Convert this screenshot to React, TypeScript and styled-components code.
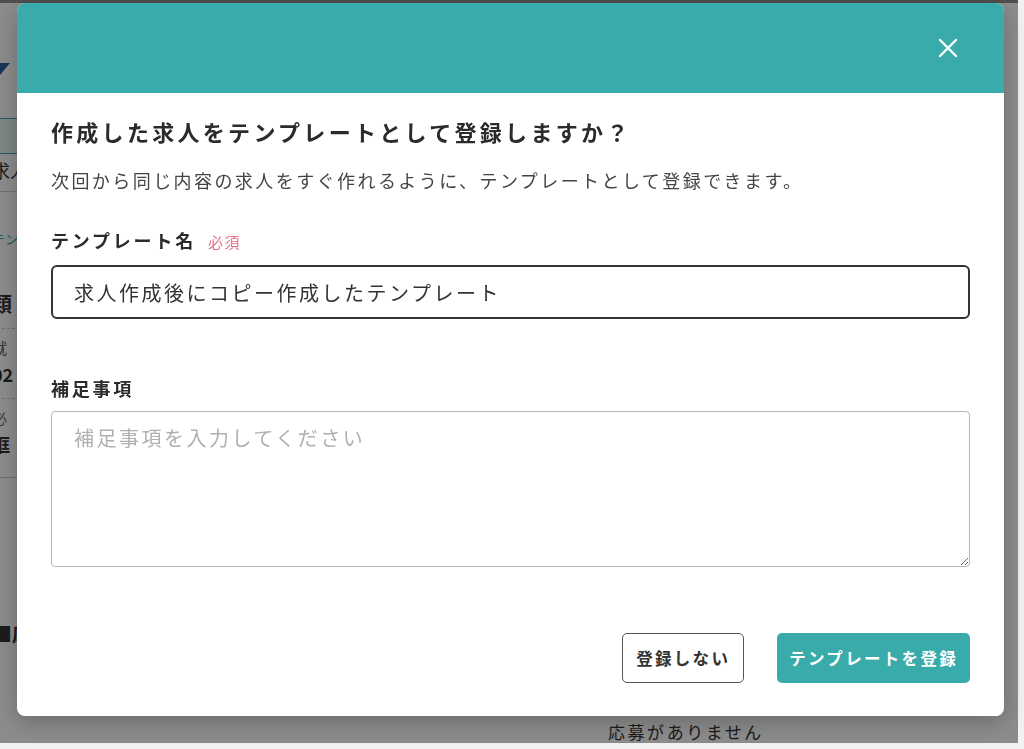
import styled, { createGlobalStyle } from 'styled-components';

const GlobalStyle = createGlobalStyle`
    * { box-sizing: border-box; }
    html, body {
        margin: 0;
        padding: 0;
        background: #f2f2f2;
        font-family: "Noto Sans CJK JP", "Noto Sans", sans-serif;
        color: #333;
        overflow: hidden;
    }
`;

const TEAL = '#3aabab';

/* ---- page behind the dialog ---- */

const Page = styled.div`
    width: 1018px;
    height: 743px;
    background: #fff;
    border-top: 3px solid #909090;
    display: flex;
    flex-direction: column;
`;

const SideColumn = styled.div`
    margin-left: -8px;
    width: 260px;
    display: flex;
    flex-direction: column;
`;

const Triangle = styled.div`
    margin-top: 60px;
    margin-left: 8px;
    width: 0;
    height: 0;
    border-top: 12px solid #2f5f9e;
    border-right: 10px solid transparent;
`;

const TabBox = styled.div`
    margin-top: 43px;
    height: 36px;
    border-top: 1px solid ${TEAL};
    border-bottom: 1px solid ${TEAL};
    background: #e4f3f3;
`;

const PlainText = styled.div<{ $size?: number; $bold?: boolean; $color?: string; $mt?: number }>`
    margin-top: ${p => p.$mt ?? 0}px;
    font-size: ${p => p.$size ?? 14}px;
    font-weight: ${p => (p.$bold ? 700 : 400)};
    color: ${p => p.$color ?? '#333'};
    line-height: 1.4;
    white-space: nowrap;
`;

const Rule = styled.div<{ $dotted?: boolean; $mt?: number }>`
    margin-top: ${p => p.$mt ?? 0}px;
    border-top: 1px ${p => (p.$dotted ? 'dashed' : 'solid')} #ccc;
`;

const EmptyNote = styled.div`
    margin-top: auto;
    padding-left: 608px;
    font-size: 17px;
    line-height: 22px;
    color: #333;
    letter-spacing: 0.15em;
`;

/* ---- overlay + dialog ---- */

const Overlay = styled.div`
    position: fixed;
    top: 0;
    left: 0;
    width: 1018px;
    height: 743px;
    background: rgba(0, 0, 0, 0.45);
    display: flex;
    align-items: flex-start;
    padding: 3px 14px 0 17px;
`;

const Dialog = styled.div`
    width: 987px;
    background: #fff;
    border-radius: 8px;
    overflow: hidden;
    box-shadow: 0 6px 24px rgba(0, 0, 0, 0.25);
`;

const DialogHeader = styled.div`
    height: 90px;
    background: ${TEAL};
    display: flex;
    justify-content: flex-end;
    align-items: center;
    padding-right: 44px;
`;

const CloseButton = styled.button`
    width: 24px;
    height: 24px;
    border: none;
    background: none;
    padding: 0;
    display: flex;
    align-items: center;
    justify-content: center;
    cursor: pointer;
`;

const DialogBody = styled.div`
    padding: 22px 34px 33px 34px;
    display: flex;
    flex-direction: column;
`;

const Title = styled.h2`
    margin: 0;
    font-size: 22px;
    line-height: 32px;
    font-weight: 700;
    letter-spacing: 0.15em;
    color: #2b2b2b;
`;

const Lead = styled.p`
    margin: 19px 0 0 0;
    font-size: 18px;
    line-height: 28px;
    letter-spacing: 0.135em;
    color: #444;
`;

const Field = styled.div<{ $mt: number }>`
    margin-top: ${p => p.$mt}px;
    display: flex;
    flex-direction: column;
`;

const LabelRow = styled.label`
    display: flex;
    align-items: baseline;
    gap: 12px;
    font-size: 18px;
    line-height: 26px;
    font-weight: 700;
    letter-spacing: 0.155em;
    color: #2b2b2b;
`;

const Required = styled.span`
    font-size: 15px;
    font-weight: 400;
    letter-spacing: 0.1em;
    color: #e2708a;
`;

const TextInput = styled.input`
    margin-top: 10px;
    width: 100%;
    height: 54px;
    border: 2px solid #333;
    border-radius: 6px;
    padding: 0 21px;
    font-family: inherit;
    font-size: 20px;
    letter-spacing: 0.125em;
    color: #333;
    outline: none;
`;

const TextArea = styled.textarea`
    margin-top: 10px;
    width: 100%;
    height: 156px;
    border: 1px solid #b8b8b8;
    border-radius: 4px;
    padding: 12px 22px;
    font-family: inherit;
    font-size: 20px;
    line-height: 28px;
    letter-spacing: 0.125em;
    color: #333;
    outline: none;
    &::placeholder {
        color: #b0b0b0;
    }
`;

const Footer = styled.div`
    margin-top: 66px;
    display: flex;
    justify-content: flex-end;
    gap: 33px;
`;

const Button = styled.button<{ $primary?: boolean }>`
    height: 50px;
    padding: 0 ${p => (p.$primary ? 12 : 13)}px;
    border-radius: 5px;
    border: ${p => (p.$primary ? 'none' : '1.5px solid #555')};
    background: ${p => (p.$primary ? TEAL : '#fff')};
    color: ${p => (p.$primary ? '#fff' : '#333')};
    font-family: inherit;
    font-size: 16.5px;
    font-weight: 700;
    letter-spacing: 0.14em;
    cursor: pointer;
`;

function App() {
    return (
        <>
            <GlobalStyle />
            <Page>
                <SideColumn>
                    <Triangle />
                    <TabBox />
                    <PlainText $size={18} $mt={4}>求人</PlainText>
                    <Rule $mt={8} />
                    <PlainText $size={13} $color={TEAL} $mt={38}>テンプレ</PlainText>
                    <PlainText $size={20} $bold $mt={42}>類</PlainText>
                    <Rule $dotted $mt={10} />
                    <PlainText $size={15} $color="#666" $mt={8}>就</PlainText>
                    <PlainText $size={18} $bold $mt={4}>02</PlainText>
                    <Rule $dotted $mt={10} />
                    <PlainText $size={15} $color="#666" $mt={8}>必</PlainText>
                    <PlainText $size={18} $bold $mt={4}>框</PlainText>
                    <Rule $mt={20} />
                    <PlainText $size={20} $bold $mt={142}>■応</PlainText>
                </SideColumn>
                <EmptyNote>応募がありません</EmptyNote>
            </Page>

            <Overlay>
                <Dialog>
                    <DialogHeader>
                        <CloseButton aria-label="閉じる">
                            <svg width="20" height="20" viewBox="0 0 20 20">
                                <path d="M2 2 L18 18 M18 2 L2 18" stroke="#fff" strokeWidth="2.4" strokeLinecap="round" />
                            </svg>
                        </CloseButton>
                    </DialogHeader>
                    <DialogBody>
                        <Title>作成した求人をテンプレートとして登録しますか？</Title>
                        <Lead>次回から同じ内容の求人をすぐ作れるように、テンプレートとして登録できます。</Lead>

                        <Field $mt={33}>
                            <LabelRow>
                                テンプレート名<Required>必須</Required>
                            </LabelRow>
                            <TextInput defaultValue="求人作成後にコピー作成したテンプレート" />
                        </Field>

                        <Field $mt={56}>
                            <LabelRow>補足事項</LabelRow>
                            <TextArea placeholder="補足事項を入力してください" />
                        </Field>

                        <Footer>
                            <Button>登録しない</Button>
                            <Button $primary>テンプレートを登録</Button>
                        </Footer>
                    </DialogBody>
                </Dialog>
            </Overlay>
        </>
    );
}

export default App;
